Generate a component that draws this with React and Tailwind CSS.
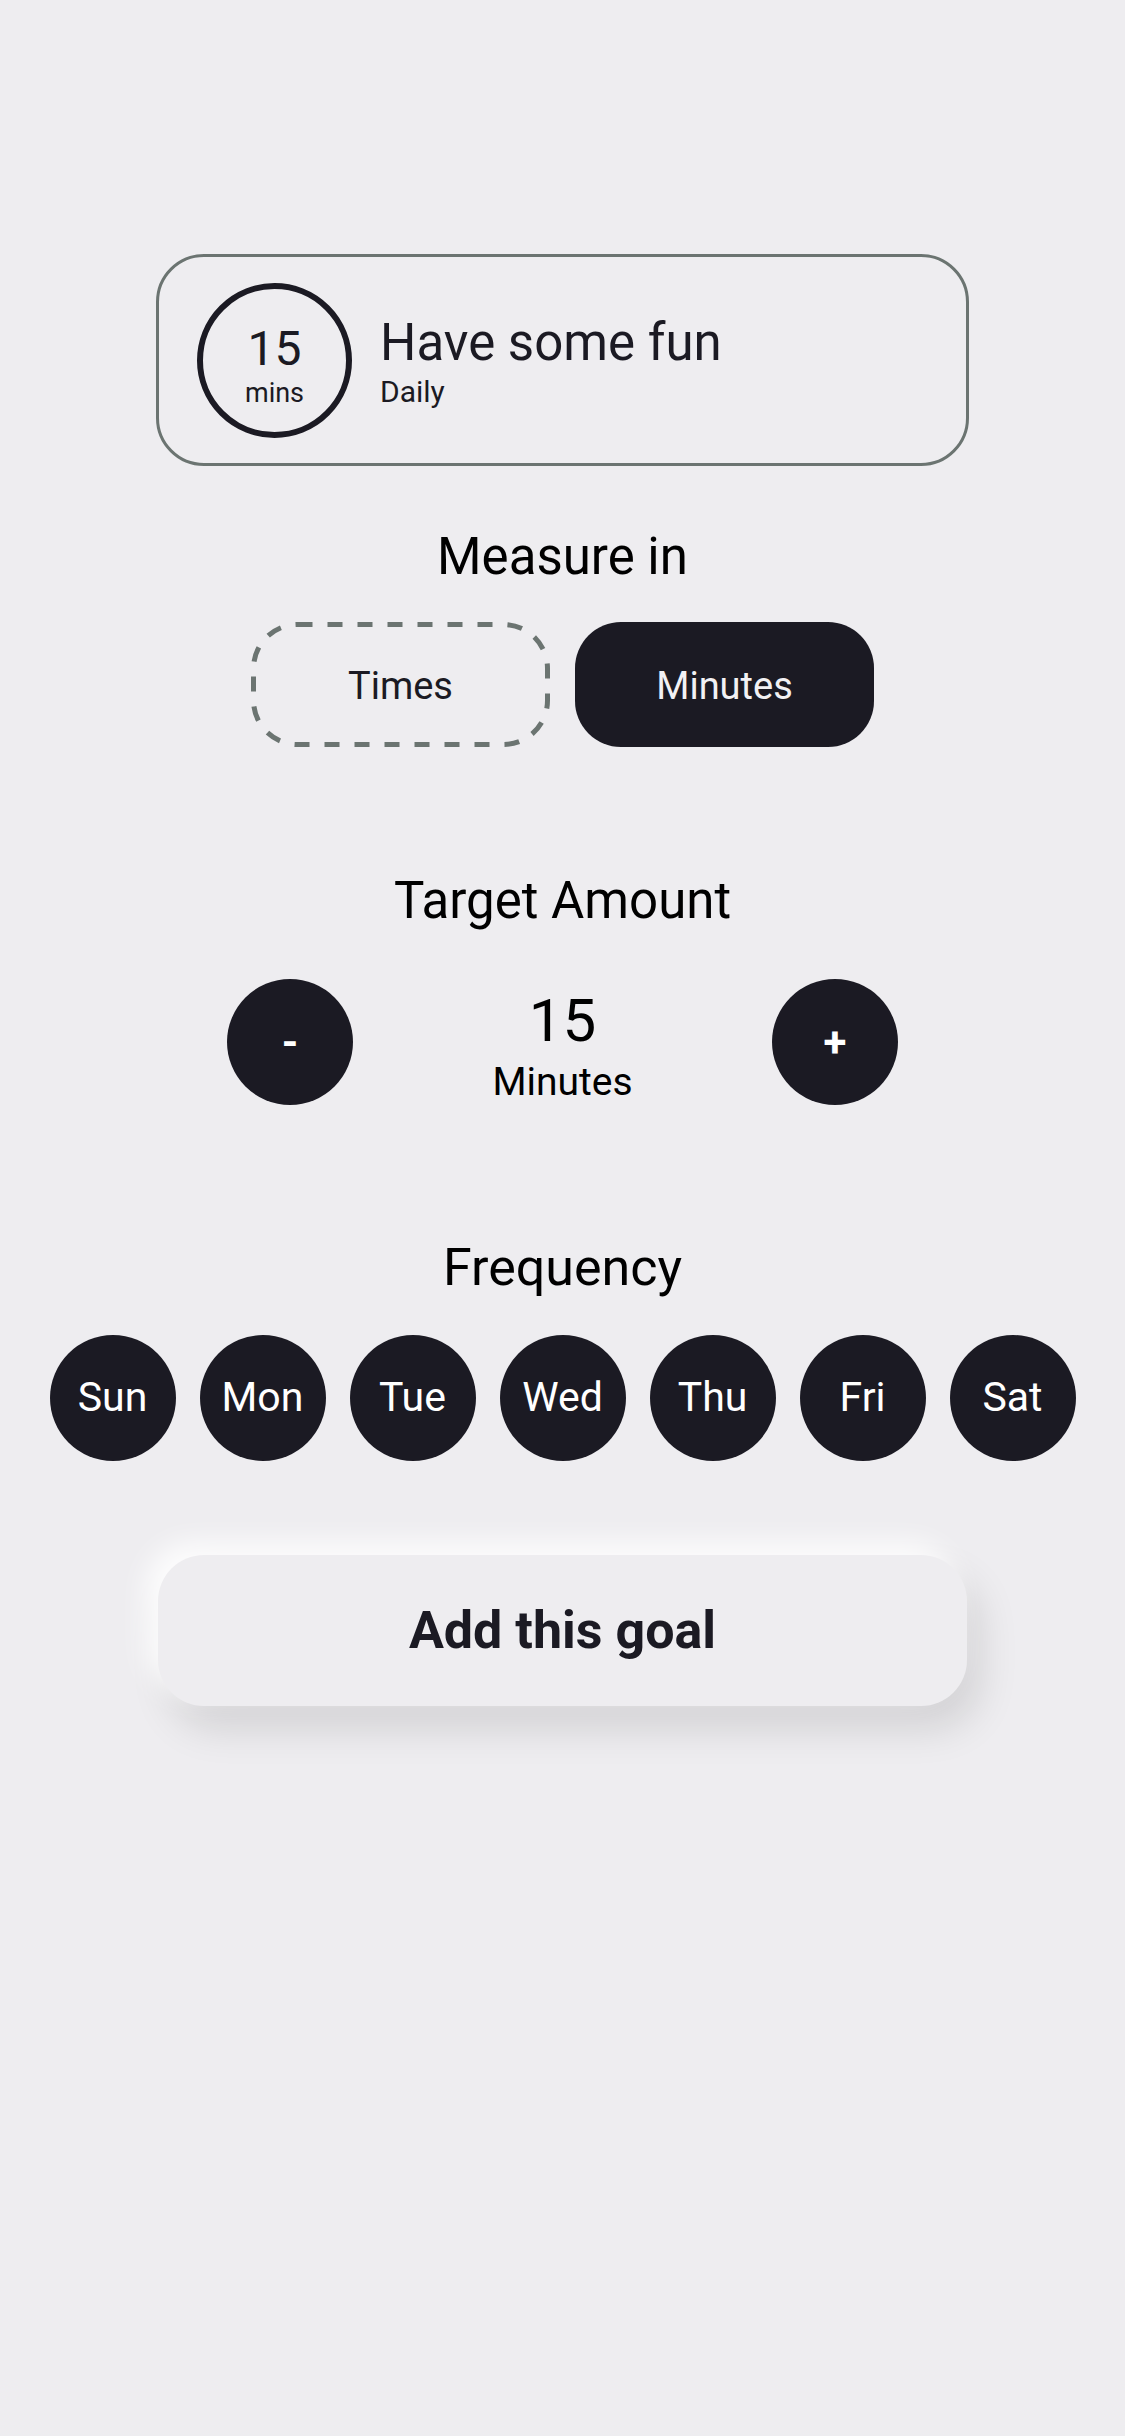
import React, { useState } from 'react';

const DAYS = ['Sun', 'Mon', 'Tue', 'Wed', 'Thu', 'Fri', 'Sat'];

// dashed outline with longer dashes than the CSS "dashed" style gives
const DashedOutline = () => (
  <svg className="absolute inset-0 pointer-events-none" width="299" height="125" viewBox="0 0 299 125">
    <rect
      x="2.5"
      y="2.5"
      width="294"
      height="120"
      rx="44"
      fill="none"
      stroke="#6b7471"
      strokeWidth="5"
      strokeDasharray="15 15"
    />
  </svg>
);

const App = () => {
  const [unit, setUnit] = useState('Minutes');
  const [amount, setAmount] = useState(15);

  return (
    <div
      className="min-h-screen w-full bg-[#eeedf0] flex flex-col items-center pt-[254px] text-[#1b1a23]"
      style={{ fontFamily: 'Roboto, "Liberation Sans", sans-serif' }}
    >
      {/* Goal summary card */}
      <div className="w-[813px] h-[212px] border-[3px] border-[#6b7471] rounded-[48px] flex items-center pl-[38px]">
        <div className="w-[155px] h-[155px] rounded-full border-[6px] border-[#1b1a23] flex flex-col items-center justify-center">
          <span className="text-[48px] leading-none mt-[12px]">{amount}</span>
          <span className="text-[27px] leading-none mt-[7px]">mins</span>
        </div>
        <div className="ml-[28px] mt-[4px] flex flex-col">
          <span className="text-[51px] leading-none">Have some fun</span>
          <span className="text-[30px] leading-none mt-[9px]">Daily</span>
        </div>
      </div>

      {/* Measure in */}
      <h2 className="mt-[65px] text-[51px] leading-none text-black">Measure in</h2>
      <div className="mt-[40px] flex gap-[25px]">
        {['Times', 'Minutes'].map((u) => (
          <button
            key={u}
            onClick={() => setUnit(u)}
            className={
              unit === u
                ? 'relative w-[299px] h-[125px] rounded-[46px] bg-[#1b1a23] text-[#f2f1f4] text-[38px]'
                : 'relative w-[299px] h-[125px] rounded-[46px] text-[#1b1a23] text-[38px]'
            }
          >
            {unit !== u && <DashedOutline />}
            <span className="relative top-[2px]">{u}</span>
          </button>
        ))}
      </div>

      {/* Target Amount */}
      <h2 className="mt-[128px] text-[51px] leading-none text-black">Target Amount</h2>
      <div className="mt-[53px] w-[671px] flex items-center justify-between">
        <button
          onClick={() => setAmount((a) => Math.max(0, a - 1))}
          className="w-[126px] h-[126px] rounded-full bg-[#1b1a23] text-white text-[42px] font-bold"
        >
          -
        </button>
        <div className="flex flex-col items-center text-black mt-[8px]">
          <span className="text-[60px] leading-none">{amount}</span>
          <span className="text-[39px] leading-none mt-[12px]">{unit}</span>
        </div>
        <button
          onClick={() => setAmount((a) => a + 1)}
          className="w-[126px] h-[126px] rounded-full bg-[#1b1a23] text-white text-[42px] font-bold"
        >
          +
        </button>
      </div>

      {/* Frequency */}
      <h2 className="mt-[137px] text-[52px] leading-none text-black">Frequency</h2>
      <div className="mt-[41px] flex gap-[24px]">
        {DAYS.map((d) => (
          <div
            key={d}
            className="w-[126px] h-[126px] rounded-full bg-[#1b1a23] text-white text-[41px] flex items-center justify-center"
          >
            {d}
          </div>
        ))}
      </div>

      {/* Submit */}
      <button className="mt-[94px] w-[809px] h-[151px] rounded-[46px] bg-[#eeedf0] text-[52px] font-bold text-[#1b1a23] shadow-[-12px_-12px_28px_rgba(255,255,255,0.9),12px_22px_40px_rgba(0,0,0,0.12)]">
        Add this goal
      </button>
    </div>
  );
};

export default App;
